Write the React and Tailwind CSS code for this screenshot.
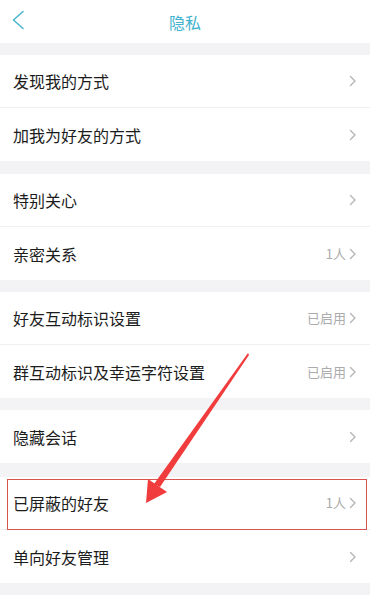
import React from "react";

const Chevron = () => (
  <svg width="8" height="12" viewBox="0 0 8 12" className="shrink-0">
    <path d="M1.5 1.5 L6 6 L1.5 10.5" fill="none" stroke="#b5b5b5" strokeWidth="1.4" strokeLinecap="round" strokeLinejoin="round" />
  </svg>
);

const Row = ({ label, value, last }) => (
  <div className={`flex h-[53px] items-center bg-white pl-[13px] pr-[13px] ${last ? "" : "border-b border-[#efeff2]"}`}>
    <span className="flex-1 text-[16px] text-[#1c1c1c]">{label}</span>
    {value && <span className="mr-[3px] text-[13px] text-[#ababab]">{value}</span>}
    <Chevron />
  </div>
);

const Group = ({ rows, mt }) => (
  <div className={`flex flex-col ${mt}`}>
    {rows.map((r, i) => (
      <Row key={r.label} label={r.label} value={r.value} last={i === rows.length - 1} />
    ))}
  </div>
);

export default function App() {
  return (
    <div
      className="relative h-[595px] w-[370px] overflow-hidden bg-[#f3f3f6]"
      style={{ fontFamily: '"Noto Sans CJK SC", "Noto Sans", sans-serif' }}
    >
      <div className="relative flex h-[43px] items-center justify-center bg-white">
        <svg width="16" height="24" viewBox="0 0 16 24" className="absolute left-[10px] top-[9px]">
          <path d="M13 2.5 L3.5 11 L13 19.5" fill="none" stroke="#4db6cf" strokeWidth="1.6" strokeLinecap="round" strokeLinejoin="round" />
        </svg>
        <span className="text-[16px] text-[#3fb3cf]">隐私</span>
      </div>

      <Group mt="mt-[12px]" rows={[{ label: "发现我的方式" }, { label: "加我为好友的方式" }]} />
      <Group mt="mt-[13px]" rows={[{ label: "特别关心" }, { label: "亲密关系", value: "1人" }]} />
      <Group
        mt="mt-[12px]"
        rows={[
          { label: "好友互动标识设置", value: "已启用" },
          { label: "群互动标识及幸运字符设置", value: "已启用" },
        ]}
      />
      <Group mt="mt-[12px]" rows={[{ label: "隐藏会话" }]} />
      <Group mt="mt-[14px]" rows={[{ label: "已屏蔽的好友", value: "1人" }, { label: "单向好友管理" }]} />

      <div className="pointer-events-none absolute left-[7px] top-[479px] h-[51px] w-[360px] border border-[#d9534f]" />

      <svg className="pointer-events-none absolute left-0 top-0" width="370" height="595" viewBox="0 0 370 595">
        <polygon points="248,353 249,355 160,487 154,484" fill="#f03c3c" />
        <polygon points="146,503 148,479 167,492" fill="#f03c3c" />
      </svg>
    </div>
  );
}
